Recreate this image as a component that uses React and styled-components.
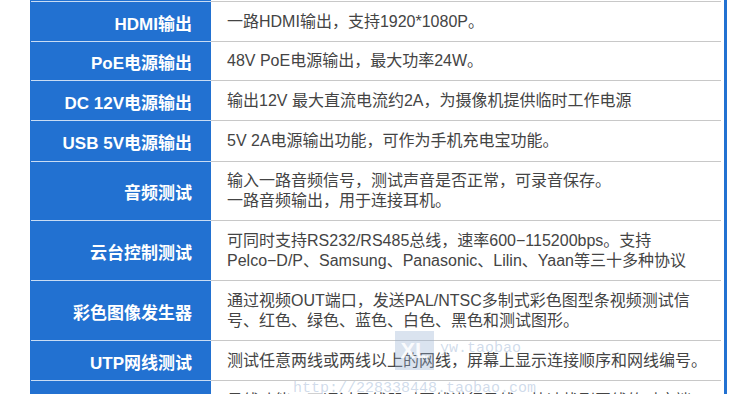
import React from 'react';
import styled, { createGlobalStyle } from 'styled-components';

const GlobalStyle = createGlobalStyle`
  html, body {
    margin: 0;
    padding: 0;
    background: #fff;
    overflow: hidden;
  }
`

const Page = styled.div`
  position: relative;
  width: 750px;
  height: 394px;
  overflow: hidden;
  padding-left: 30px;
  box-sizing: border-box;
  font-family: "Liberation Sans", "Noto Sans CJK SC", sans-serif;
`

const Table = styled.div`
  width: 694px;
  display: grid;
  grid-template-columns: 181px 510px;
  border-right: 3px solid #2271d1;
`

const Label = styled.div`
  background: #2271d1;
  color: #fff;
  font-size: 17px;
  font-weight: 700;
  display: flex;
  align-items: center;
  justify-content: flex-end;
  padding-right: 19px;
  white-space: nowrap;
  position: relative;
  height: ${p => p.$h}px;

  &::after {
    content: '';
    position: absolute;
    left: 1px;
    right: 0;
    bottom: 0;
    height: 1px;
    background: #c9dcf4;
  }
`

const Desc = styled.div`
  color: #444;
  font-size: 16px;
  line-height: 20px;
  display: flex;
  flex-direction: column;
  justify-content: center;
  padding-left: 16px;
  white-space: nowrap;
  border-bottom: 1px solid #c8c8c8;
  height: ${p => p.$h}px;
  box-sizing: border-box;
`

const Watermark = styled.div`
  position: absolute;
  pointer-events: none;
  left: ${p => p.$x}px;
  top: ${p => p.$y}px;
`

const MarkBox = styled.div`
  width: 39px;
  height: 39px;
  background: rgba(150, 175, 210, 0.35);
  color: rgba(255, 255, 255, 0.9);
  font-size: 22px;
  font-weight: 700;
  display: flex;
  align-items: center;
  justify-content: center;
`

const MarkText = styled.div`
  color: rgba(150, 175, 210, 0.45);
  font-family: "Liberation Mono", monospace;
  font-size: 15px;
  white-space: nowrap;
`

const rows = [
  { h: 2, label: '', lines: [] },
  { h: 40, label: 'HDMI输出', lines: ['一路HDMI输出，支持1920*1080P。'] },
  { h: 39, label: 'PoE电源输出', lines: ['48V PoE电源输出，最大功率24W。'] },
  { h: 40, label: 'DC 12V电源输出', lines: ['输出12V 最大直流电流约2A，为摄像机提供临时工作电源'] },
  { h: 41, label: 'USB 5V电源输出', lines: ['5V 2A电源输出功能，可作为手机充电宝功能。'] },
  { h: 59, label: '音频测试', lines: ['输入一路音频信号，测试声音是否正常，可录音保存。', '一路音频输出，用于连接耳机。'] },
  { h: 60, label: '云台控制测试', lines: ['可同时支持RS232/RS485总线，速率600−115200bps。支持', 'Pelco−D/P、Samsung、Panasonic、Lilin、Yaan等三十多种协议'] },
  { h: 60, label: '彩色图像发生器', lines: ['通过视频OUT端口，发送PAL/NTSC多制式彩色图型条视频测试信', '号、红色、绿色、蓝色、白色、黑色和测试图形。'] },
  { h: 40, label: 'UTP网线测试', lines: ['测试任意两线或两线以上的网线，屏幕上显示连接顺序和网线编号。'] },
  { h: 40, label: '', lines: ['寻线功能：可通过寻线器对网线进行寻线，快速找到网线的对应端口。'] },
];

const App = () => (
  <Page>
    <GlobalStyle />
    <Table>
      {rows.map((r, i) => (
        <React.Fragment key={i}>
          <Label $h={r.h}>{r.label}</Label>
          <Desc $h={r.h}>
            {r.lines.map((l, j) => <span key={j}>{l}</span>)}
          </Desc>
        </React.Fragment>
      ))}
    </Table>
    <Watermark $x={395} $y={331}>
      <MarkBox>XL</MarkBox>
    </Watermark>
    <Watermark $x={440} $y={340}>
      <MarkText>yw.taobao</MarkText>
    </Watermark>
    <Watermark $x={293} $y={380}>
      <MarkText>http://228338448.taobao.com</MarkText>
    </Watermark>
  </Page>
);

export default App;
